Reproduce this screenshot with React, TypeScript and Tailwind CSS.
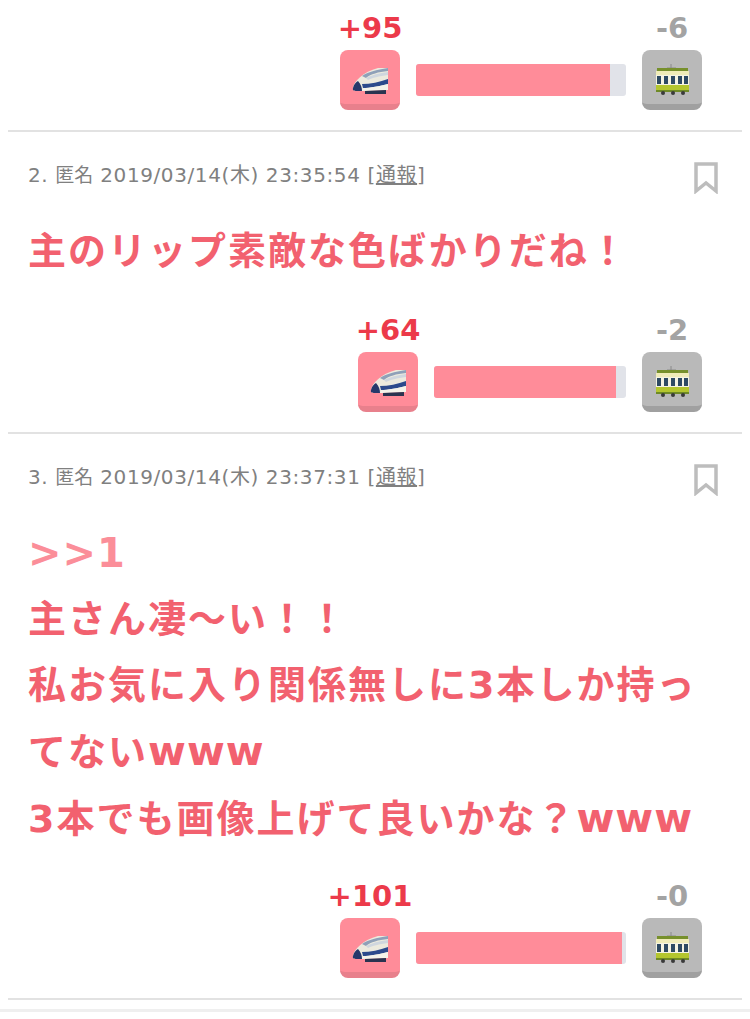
const font = '[font-family:"DejaVu_Sans","Noto_Sans_CJK_JP",sans-serif]';

function ShinkansenIcon() {
  return (
    <svg width="37" height="28" viewBox="0 0 37 28" className="mt-[7px]">
      <path d="M1 21 C2 14 11 5 26 1 L36 1 L36 23 L8 24 C3 24 0 24 1 21 Z" fill="#eceade" />
      <path d="M10 9 C16 5 24 3 36 1 L36 4 C26 5 19 7 14 11 Z" fill="#8fa0b8" />
      <path d="M14 11 C20 8 27 6 36 5 L36 8 C27 9 20 11 16 13 Z" fill="#cfd6de" />
      <path d="M1 21 C2 17 4 15 6 14 C9 17 10 21 10 24 L6 24 C3 24 0 24 1 21 Z" fill="#26386b" />
      <path d="M10 17 C18 17 28 15 36 12 L36 17 C28 19 18 21 11 21 Z" fill="#2c4a8c" />
      <path d="M11 21 C18 21 28 19 36 17 L36 23 L10 24 Z" fill="#f4f3ea" />
      <path d="M13 24 L34 23 L34 27 L13 27 Z" fill="#2a3350" />
    </svg>
  );
}

function TramIcon() {
  return (
    <svg width="35" height="32" viewBox="0 0 35 32" className="mt-[5px]">
      <path d="M16 0 L16 4 M12 4 L21 4" stroke="#8a8a8a" strokeWidth="1" fill="none" />
      <rect x="2" y="4" width="31" height="3" fill="#77902c" />
      <rect x="1" y="7" width="33" height="4" fill="#f0ecb8" />
      <rect x="1" y="11" width="33" height="10" fill="#f5f3e2" />
      <rect x="2" y="12" width="4" height="8" fill="#2e4a63" />
      <rect x="9" y="12" width="4" height="8" fill="#2e4a63" />
      <rect x="16" y="12" width="4" height="8" fill="#2e4a63" />
      <rect x="23" y="12" width="4" height="8" fill="#2e4a63" />
      <rect x="29" y="12" width="4" height="8" fill="#2e4a63" />
      <rect x="1" y="21" width="33" height="5" fill="#b4c62e" />
      <rect x="1" y="26" width="33" height="2" fill="#6f8a26" />
      <circle cx="8" cy="29" r="2" fill="#3a3a3a" />
      <circle cx="18" cy="29" r="2" fill="#3a3a3a" />
      <circle cx="28" cy="29" r="2" fill="#3a3a3a" />
    </svg>
  );
}

function Votes({ plus, minus, barWidth, fill }: { plus: string; minus: string; barWidth: string; fill: string }) {
  return (
    <div className="flex justify-end pr-[40px]">
      <div className="flex w-[60px] flex-col items-center">
        <div className="h-[34px] whitespace-nowrap text-[29px] leading-[25px] font-bold text-[#ec3a4a]">{plus}</div>
        <div className="flex h-[60px] w-[60px] items-center justify-center rounded-[8px] border-b-[6px] border-[#e8808c] bg-[#ff8c99]">
          <ShinkansenIcon />
        </div>
      </div>
      <div className={`mx-4 mt-[48px] h-[32px] rounded-[3px] bg-[#e1e3e9] ${barWidth}`}>
        <div className={`h-full rounded-l-[3px] bg-[#ff8c99] ${fill}`} />
      </div>
      <div className="flex w-[60px] flex-col items-center">
        <div className="h-[34px] text-[29px] leading-[25px] font-bold text-[#a3a3a3]">{minus}</div>
        <div className="flex h-[60px] w-[60px] items-center justify-center rounded-[8px] border-b-[6px] border-[#a0a0a0] bg-[#b9b9b9]">
          <TramIcon />
        </div>
      </div>
    </div>
  );
}

function Header({ no, date }: { no: string; date: string }) {
  return (
    <div className="flex items-start justify-between pl-[20px] pr-[24px]">
      <div className="text-[20px] leading-[28px] tracking-[0.6px] text-[#808080]">
        {no}. <span className="text-[19px] tracking-normal">匿名</span> {date} [<span className="underline">通報</span>]
      </div>
      <svg width="24" height="32" viewBox="0 0 24 32" className="mt-[1px]">
        <path d="M2 2 H22 V29 L12 21 L2 29 Z" fill="none" stroke="#bdbdbd" strokeWidth="3.5" />
      </svg>
    </div>
  );
}

export default function App() {
  return (
    <div className={`${font} h-[1019px] overflow-hidden bg-white`}>
      <div className="mx-2 border-b-2 border-[#e2e2e2] pt-[16px] pb-[20px]">
        <Votes plus="+95" minus="-6" barWidth="w-[210px]" fill="w-[194px]" />
      </div>

      <div className="mx-2 border-b-2 border-[#e2e2e2] pt-[29px] pb-[20px]">
        <Header no="2" date="2019/03/14(木) 23:35:54" />
        <div className="mt-[24px] mb-[34px] pl-[20px] text-[38px] leading-[66px] font-bold tracking-[2px] text-[#f2616f]">
          主のリップ素敵な色ばかりだね！
        </div>
        <Votes plus="+64" minus="-2" barWidth="w-[192px]" fill="w-[182px]" />
      </div>

      <div className="mx-2 border-b-2 border-[#e2e2e2] pt-[29px] pb-[20px]">
        <Header no="3" date="2019/03/14(木) 23:37:31" />
        <div className="mt-[24px] mb-[32px] pl-[20px] text-[38px] leading-[66px] font-bold tracking-[2px] text-[#f2616f]">
          <div className="text-[40px] tracking-[1px] text-[#fb8e99]">&gt;&gt;1</div>
          <div>主さん凄〜い！！</div>
          <div>私お気に入り関係無しに3本しか持っ</div>
          <div>
            てない<span className="text-[41px] tracking-[1px]">www</span>
          </div>
          <div>
            3本でも画像上げて良いかな？<span className="text-[41px] tracking-[1px]">www</span>
          </div>
        </div>
        <Votes plus="+101" minus="-0" barWidth="w-[210px]" fill="w-[206px]" />
      </div>

      <div className="mt-[9px] h-[3px] bg-[#efefef]" />
    </div>
  );
}
